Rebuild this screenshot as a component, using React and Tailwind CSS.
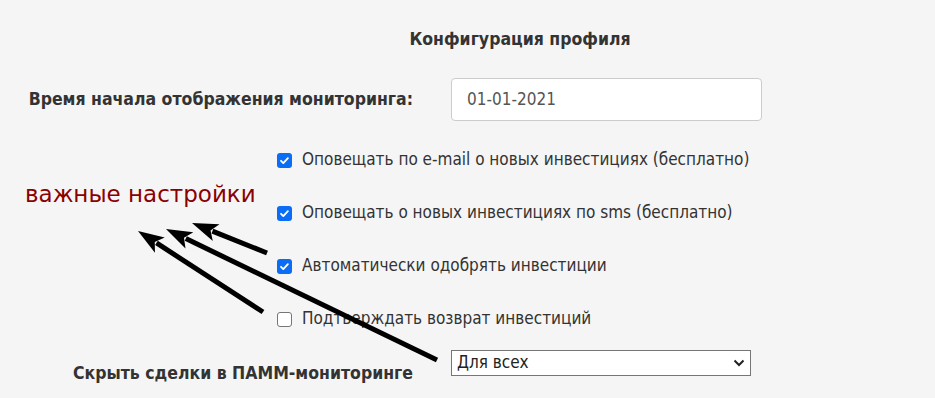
import React from 'react';

const options = [
  { label: 'Оповещать по e-mail о новых инвестициях (бесплатно)', checked: true },
  { label: 'Оповещать о новых инвестициях по sms (бесплатно)', checked: true },
  { label: 'Автоматически одобрять инвестиции', checked: true },
  { label: 'Подтверждать возврат инвестиций', checked: false },
];

function Check({ checked }) {
  if (checked) {
    return (
      <span className="flex h-[15px] w-[15px] shrink-0 items-center justify-center rounded-[3px] bg-[#0b6cf5]">
        <svg width="11" height="11" viewBox="0 0 12 12" fill="none">
          <path d="M2.2 6.3l2.5 2.5 5-5.4" stroke="#fff" strokeWidth="2" strokeLinecap="round" strokeLinejoin="round" />
        </svg>
      </span>
    );
  }
  return <span className="h-[15px] w-[15px] shrink-0 rounded-[3px] border border-[#767676] bg-white" />;
}

// стрелки поверх формы
function Arrows() {
  const arrows = [
    [267, 253, 192, 223],
    [437, 360, 166, 229],
    [263, 312, 138, 231],
  ];
  return (
    <svg className="pointer-events-none absolute left-0 top-0" width="935" height="398">
      {arrows.map(([x1, y1, x2, y2], i) => {
        const a = Math.atan2(y2 - y1, x2 - x1);
        const len = 26;
        const w = 9;
        const bx = x2 - Math.cos(a) * len;
        const by = y2 - Math.sin(a) * len;
        const px = -Math.sin(a) * w;
        const py = Math.cos(a) * w;
        return (
          <g key={i}>
            <line x1={x1} y1={y1} x2={bx + Math.cos(a) * 4} y2={by + Math.sin(a) * 4} stroke="#000" strokeWidth="5" />
            <polygon points={`${x2},${y2} ${bx + px},${by + py} ${bx + Math.cos(a) * 6},${by + Math.sin(a) * 6} ${bx - px},${by - py}`} fill="#000" />
          </g>
        );
      })}
    </svg>
  );
}

export default function App() {
  return (
    <div className="relative h-[398px] w-[935px] overflow-hidden bg-[#f5f5f5] font-['DejaVu_Sans_Condensed','DejaVu_Sans',sans-serif] text-[#333]">
      <div className="pl-[105px] pt-[28px] text-center text-[17.5px] font-bold leading-[22px]">Конфигурация профиля</div>

      <div className="mt-[28px] flex items-center">
        <div className="w-[413px] text-right text-[17.5px] font-bold">Время начала отображения мониторинга:</div>
        <div className="ml-[38px] flex h-[43px] w-[311px] items-center rounded-[4px] border border-[#ccc] bg-white px-[15px] text-[17px] text-[#555]">
          01-01-2021
        </div>
      </div>

      <div className="relative mt-[28px]">
        <div className="absolute left-[25px] top-[28px] font-['DejaVu_Sans',sans-serif] text-[23px] text-[#8b0000]">важные настройки</div>
        <div className="flex flex-col gap-[31px] pl-[277px]">
          {options.map((o) => (
            <label key={o.label} className="flex h-[22px] items-center gap-[10px] text-[17px] text-[#333]">
              <Check checked={o.checked} />
              <span>{o.label}</span>
            </label>
          ))}
        </div>
      </div>

      <div className="mt-[20px] flex items-start">
        <div className="w-[413px] pt-[10px] text-right text-[17.5px] font-bold">Скрыть сделки в ПАММ-мониторинге</div>
        <div className="ml-[38px] flex h-[26px] w-[300px] items-center justify-between border border-[#767676] bg-white pl-[5px] pr-[5px] text-[17px] text-[#222]">
          <span>Для всех</span>
          <svg width="12" height="8" viewBox="0 0 12 8" fill="none">
            <path d="M1.5 1.5l4.5 4.5 4.5-4.5" stroke="#222" strokeWidth="2" />
          </svg>
        </div>
      </div>

      <Arrows />
    </div>
  );
}
